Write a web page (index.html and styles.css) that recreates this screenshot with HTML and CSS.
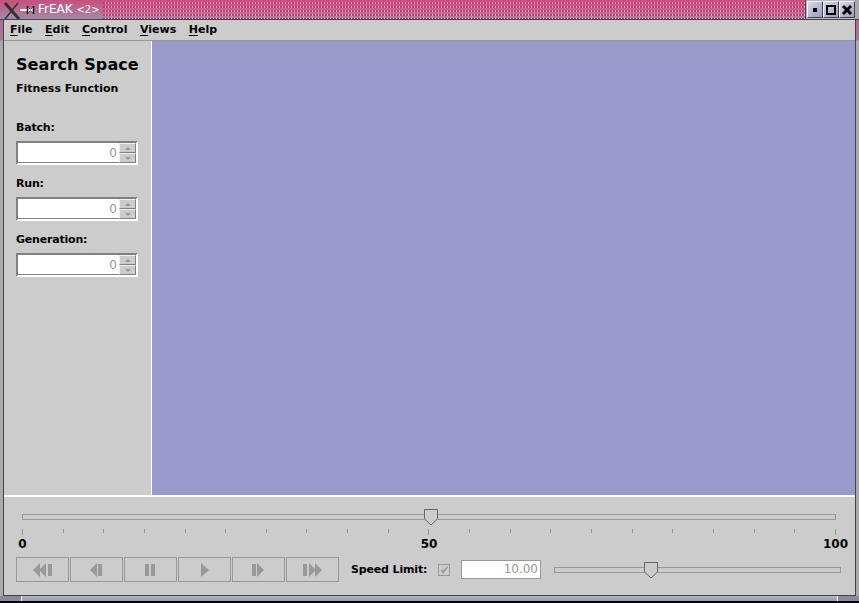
FILE: index.html
```html
<!DOCTYPE html>
<html lang="en">
<head>
<meta charset="utf-8">
<title>FrEAK</title>
<link rel="stylesheet" href="styles.css">
</head>
<body>
<div class="window">
  <header class="titlebar">
    <svg class="wm-logo" width="36" height="19" viewBox="0 0 36 19">
      <path d="M3 3 L17 19" stroke="#333" stroke-width="3" fill="none"/>
      <path d="M16 3 L3 19" stroke="#333" stroke-width="1.5" fill="none"/>
      <path d="M18 10 H25" stroke="#fff" stroke-width="2"/>
      <path d="M25.5 6 V14 M31.5 6 V14" stroke="#111" stroke-width="1.5"/>
      <path d="M26 7 L28 9 H29 L31 7 V13 L29 11 H28 L26 13 Z" fill="#fff" stroke="#333" stroke-width=".7"/>
    </svg>
    <span class="title-text">FrEAK <span class="title-sub">&lt;2&gt;</span></span>
    <div class="title-dots"></div>
    <div class="wm-buttons">
      <span class="wm-btn"><i class="wm-min"></i></span>
      <span class="wm-btn"><i class="wm-max"></i></span>
      <span class="wm-btn"><svg width="10" height="10" viewBox="0 0 10 10"><path d="M1 1 L9 9 M9 1 L1 9" stroke="#000" stroke-width="3"/></svg></span>
    </div>
  </header>
  <div class="frame">
    <nav class="menubar">
      <span class="menu"><u>F</u>ile</span>
      <span class="menu"><u>E</u>dit</span>
      <span class="menu"><u>C</u>ontrol</span>
      <span class="menu"><u>V</u>iews</span>
      <span class="menu"><u>H</u>elp</span>
    </nav>
    <div class="content">
      <aside class="side">
        <h1 class="side-title">Search Space</h1>
        <p class="side-sub">Fitness Function</p>
        <label class="field-label">Batch:</label>
        <div class="spinner"><span class="spin-input">0</span><span class="spin-btns"><span class="spin-btn"><i class="up"></i></span><span class="spin-btn"><i class="down"></i></span></span></div>
        <label class="field-label">Run:</label>
        <div class="spinner"><span class="spin-input">0</span><span class="spin-btns"><span class="spin-btn"><i class="up"></i></span><span class="spin-btn"><i class="down"></i></span></span></div>
        <label class="field-label">Generation:</label>
        <div class="spinner"><span class="spin-input">0</span><span class="spin-btns"><span class="spin-btn"><i class="up"></i></span><span class="spin-btn"><i class="down"></i></span></span></div>
      </aside>
      <main class="canvas"></main>
    </div>
    <section class="controls">
      <div class="progress">
        <div class="track">
          <svg class="thumb thumb-main" width="16" height="17" viewBox="0 0 16 17"><path d="M1.5 .5 H14.5 V10 L8 16 L1.5 10 Z" fill="#ccc" stroke="#666"/></svg>
        </div>
        <div class="ticks">
          <i class="tick major"></i><i class="tick"></i><i class="tick"></i><i class="tick"></i><i class="tick"></i><i class="tick"></i><i class="tick"></i><i class="tick"></i><i class="tick"></i><i class="tick"></i><i class="tick major"></i><i class="tick"></i><i class="tick"></i><i class="tick"></i><i class="tick"></i><i class="tick"></i><i class="tick"></i><i class="tick"></i><i class="tick"></i><i class="tick"></i><i class="tick major"></i>
        </div>
        <div class="scale"><span class="scale-num">0</span><span class="scale-num">50</span><span class="scale-num">100</span></div>
      </div>
      <div class="toolbar">
        <div class="player">
          <button class="pbtn"><svg width="20" height="14" viewBox="0 0 20 14"><path d="M7 0 V14 L0 7 Z M13 0 V14 L6 7 Z" fill="#999"/><path d="M15 1 H19 V13 H15 Z" fill="#999"/></svg></button>
          <button class="pbtn"><svg width="13" height="14" viewBox="0 0 13 14"><path d="M7 0 V14 L0 7 Z" fill="#999"/><path d="M8 1 H12 V13 H8 Z" fill="#999"/></svg></button>
          <button class="pbtn"><svg width="11" height="14" viewBox="0 0 11 14"><path d="M0 1 H4 V13 H0 Z M6 1 H10 V13 H6 Z" fill="#999"/></svg></button>
          <button class="pbtn"><svg width="8" height="14" viewBox="0 0 8 14"><path d="M0 0 V14 L8 7 Z" fill="#999"/></svg></button>
          <button class="pbtn"><svg width="13" height="14" viewBox="0 0 13 14"><path d="M0 1 H4 V13 H0 Z" fill="#999"/><path d="M5 0 V14 L12 7 Z" fill="#999"/></svg></button>
          <button class="pbtn"><svg width="20" height="14" viewBox="0 0 20 14"><path d="M0 1 H4 V13 H0 Z" fill="#999"/><path d="M6 0 V14 L13 7 Z M12 0 V14 L19 7 Z" fill="#999"/></svg></button>
        </div>
        <span class="speed-label">Speed Limit:</span>
        <span class="check"><svg width="10" height="10" viewBox="0 0 10 10"><path d="M2 5 L4 8.5 L9 1.5 L4 5.5 Z" fill="#999" stroke="#999" stroke-width=".6"/></svg></span>
        <span class="speed-input">10.00</span>
        <div class="track speed-track">
          <svg class="thumb thumb-speed" width="16" height="17" viewBox="0 0 16 17"><path d="M1.5 .5 H14.5 V10 L8 16 L1.5 10 Z" fill="#ccc" stroke="#666"/></svg>
        </div>
      </div>
    </section>
  </div>
  <footer class="bottombar"><span class="grip"></span><span class="bar"></span><span class="grip grip-r"></span></footer>
</div>
</body>
</html>
```
FILE: styles.css
```css
* { box-sizing: border-box; }
html, body { margin: 0; padding: 0; }
body { width: 859px; height: 603px; overflow: hidden; background: #000; font-family: "DejaVu Sans", sans-serif; }
.window { width: 859px; height: 603px; display: flex; flex-direction: column; background: linear-gradient(#b5608a 0, #a07a98 40px, #aaa 41px, #aaa 100%); }

.titlebar {
  height: 20px; flex: none; display: flex; position: relative; border-bottom: 1px solid #444;
  background: linear-gradient(#c8507f, #a08aa6);
}
.wm-logo { flex: none; margin-left: 2px; overflow: visible; }
.title-text { width: 65px; flex: none; color: #fff; font-size: 12px; line-height: 18px; white-space: nowrap; }
.title-sub { font-size: 10px; }
.title-dots {
  flex: 1; min-width: 0;
  background-image:
    radial-gradient(circle at 1px 1px, #d8306f 1px, transparent 1px),
    radial-gradient(circle at 2px 1px, #e6a6c0 1px, transparent 1px);
  background-size: 3px 4px, 3px 4px;
  background-position: 0 2px, 0 2px;
}
.wm-buttons { width: 54px; flex: none; height: 19px; display: flex; padding: 1px 0 1px 1px; background: #bbb; border-left: 1px solid #444; border-right: 4px solid #aaa; }
.wm-btn { width: 16px; height: 17px; flex: none; display: flex; align-items: center; justify-content: center; background: linear-gradient(135deg, #d8d9e8, #9c9cb8); border: 1px solid #f0f0f8; border-right-color: #445; border-bottom-color: #445; }
.wm-min { width: 4px; height: 4px; background: #000; }
.wm-max { width: 10px; height: 10px; border: 2px solid #000; }

.frame { flex: 1; min-height: 0; display: flex; flex-direction: column; margin: 0 3px 0 3px; border-left: 1px solid #444; border-right: 1px solid #444; }
.menubar { height: 21px; flex: none; display: flex; gap: 12.5px; padding-left: 6px; align-items: center; background: #ccc; border-bottom: 1px solid #999; }
.menu { font-size: 11px; font-weight: 700; color: #000; line-height: 20px; }
.menu u { text-underline-offset: 2px; }

.content { flex: none; height: 456px; display: flex; border-bottom: 2px solid #fff; }
.side { width: 147px; flex: none; padding: 12px 0 0 12px; background: #ccc; }
.side-title { margin: 0; font-size: 16px; line-height: 24px; font-weight: 700; letter-spacing: .1px; color: #000; white-space: nowrap; }
.side-sub { margin: 4px 0 24px; font-size: 11px; line-height: 15px; font-weight: 700; color: #000; white-space: nowrap; }
.field-label { display: block; font-size: 11px; line-height: 15px; font-weight: 700; letter-spacing: -.2px; color: #000; margin-bottom: 6px; }
.spinner { width: 122px; height: 24px; display: flex; border: 2px solid #808080; border-right-color: #fff; border-bottom-color: #fff; margin-bottom: 11px; background: #fff; }
.spin-input { flex: 1; background: #fff; color: #999; font-size: 12px; line-height: 20px; text-align: right; padding-right: 2px; border-bottom: 1px solid #808080; }
.spin-btns { width: 17px; flex: none; display: flex; flex-direction: column; background: #ccc; }
.spin-btn { flex: 1; display: flex; align-items: center; justify-content: center; background: #ccc; border: 1px solid #808080; border-top-color: #eee; border-left-color: #eee; }
.spin-btn i { width: 0; height: 0; border-left: 3px solid transparent; border-right: 3px solid transparent; }
.spin-btn .up { border-bottom: 3px solid #999; }
.spin-btn .down { border-top: 3px solid #999; }

.canvas { flex: 1; background: #9999cc; border-left: 1px solid #fff; }

.controls { flex: 1; min-height: 0; background: #ccc; border-bottom: 1px solid #444; padding: 17px 14px 0 12px; }
.progress { width: 826px; padding: 0 6px; }
.track { position: relative; height: 6px; border: 1px solid #999; }
.thumb { position: absolute; top: -6px; }
.thumb-main { left: 400px; }
.ticks { display: flex; justify-content: space-between; align-items: flex-start; margin-top: 9px; height: 6px; }
.tick { width: 1px; height: 4px; background: #999; }
.tick.major { height: 6px; }
.scale { display: flex; justify-content: space-between; font-size: 12px; font-weight: 700; line-height: 15px; margin-top: 2px; color: #000; }
.scale-num { width: 1px; display: flex; justify-content: center; }
.toolbar { display: flex; align-items: center; margin-top: 5px; height: 25px; }
.player { display: flex; gap: 1px; width: 323px; flex: none; }
.pbtn { width: 53px; height: 25px; padding: 0; background: #ccc; border: 1px solid #999; display: flex; align-items: center; justify-content: center; }
.speed-label { width: 77px; flex: none; margin-left: 12px; font-size: 11px; font-weight: 700; letter-spacing: -.15px; color: #000; white-space: nowrap; }
.check { width: 12px; height: 12px; margin-left: 10px; flex: none; border: 1px solid #999; display: flex; align-items: center; justify-content: center; }
.speed-input { width: 80px; height: 19px; margin-left: 11px; flex: none; background: #fff; border: 1px solid #999; color: #999; font-size: 12px; line-height: 17px; text-align: right; padding-right: 2px; }
.speed-track { width: 287px; margin-left: 13px; flex: none; }
.thumb-speed { left: 88px; }

.bottombar { height: 7px; flex: none; display: flex; border-bottom: 2px solid #000; }
.grip { width: 22px; flex: none; background: #8a8a9a; border-right: 1px solid #fff; }
.grip-r { border-right: 0; border-left: 1px solid #fff; }
.bar { flex: 1; background: linear-gradient(#b4b4ca, #9a9ab4); }
```
